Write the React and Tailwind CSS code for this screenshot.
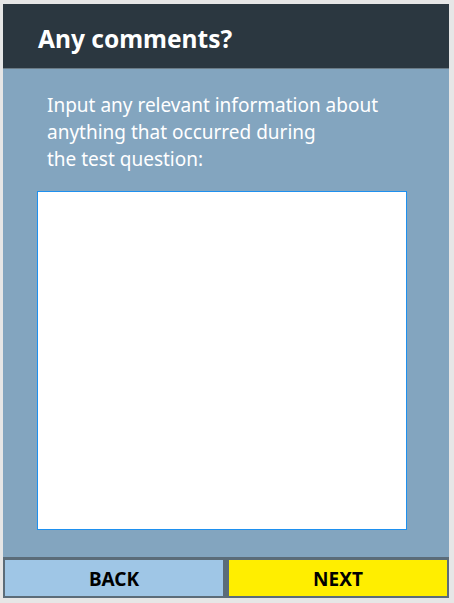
export default function App() {
    return (
        <div className="w-[454px] h-[603px] bg-[#e6e6e6] pt-[4px] pl-[3px] pr-[5px] pb-[5px]" style={{ fontFamily: '"Noto Sans", "Open Sans", sans-serif' }}>
            <div className="h-full flex flex-col bg-[#83a5bf]">
                {/* Header */}
                <div className="h-[65px] shrink-0 bg-[#2b3740] border-b border-[#6b7b86] flex items-center pl-[35px] pt-[6px]">
                    <h1 className="text-white font-bold text-[24.5px] leading-none">Any comments?</h1>
                </div>

                {/* Body */}
                <div className="flex-1 flex flex-col pt-[23px] px-[34px]">
                    <p className="text-white text-[19px] leading-[27px] pl-[10px]">
                        Input any relevant information about<br />
                        anything that occurred during<br />
                        the test question:
                    </p>
                    <textarea className="mt-[18px] w-[370px] h-[339px] bg-white border border-[#1e90ef] outline-none resize-none" />
                </div>

                {/* Footer */}
                <div className="h-[41px] shrink-0 flex bg-[#5b6c79] gap-[2px] pt-[1px]">
                    <button className="flex-1 bg-[#9fc6e6] border-2 border-[#5b6c79] text-black font-bold text-[19px] pt-[3px]">BACK</button>
                    <button className="flex-1 bg-[#ffee00] border-2 border-[#5b6c79] text-black font-bold text-[19px] pt-[3px]">NEXT</button>
                </div>
            </div>
        </div>
    )
}
